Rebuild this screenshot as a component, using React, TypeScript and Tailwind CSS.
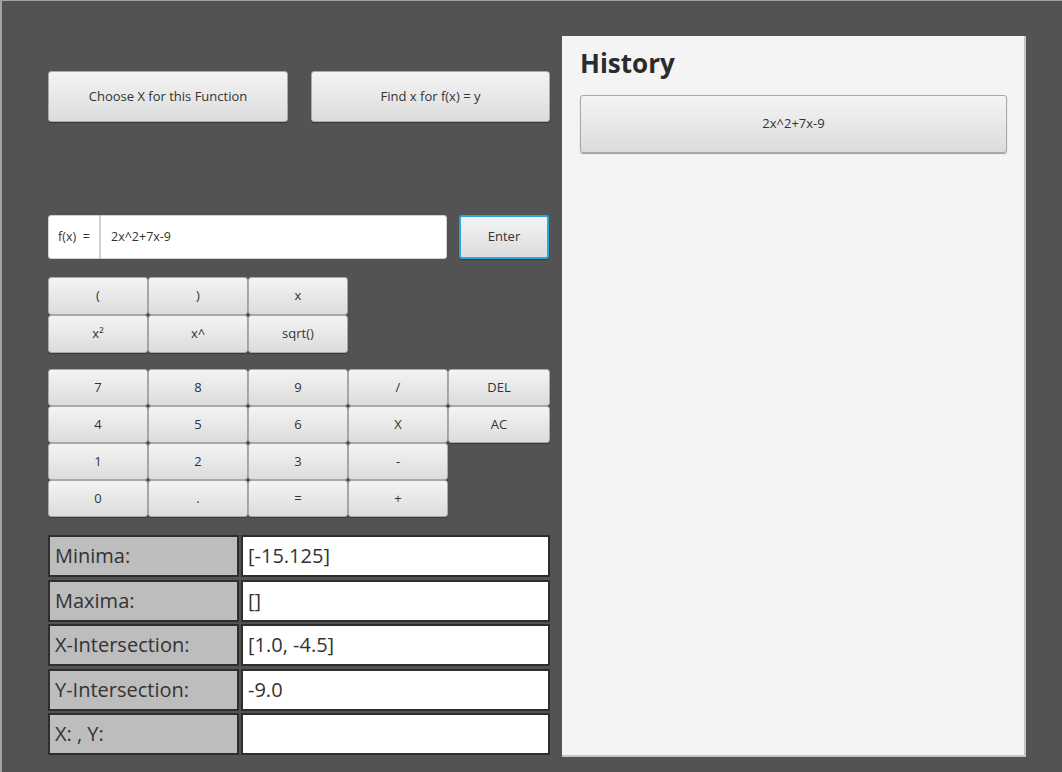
import React from "react";

const btn =
  "flex items-center justify-center text-[13px] text-[#333] bg-gradient-to-b from-[#f4f4f4] to-[#dcdcdc] border border-[#a9a9a9] rounded-[3px] shadow-[0_1px_1px_rgba(0,0,0,0.35)]";

const fnKeys = ["(", ")", "x", "x²", "x^", "sqrt()"];

const numKeys: (string | null)[] = [
  "7", "8", "9", "/", "DEL",
  "4", "5", "6", "X", "AC",
  "1", "2", "3", "-", null,
  "0", ".", "=", "+", null,
];

const results = [
  { label: "Minima:", value: "[-15.125]" },
  { label: "Maxima:", value: "[]" },
  { label: "X-Intersection:", value: "[1.0, -4.5]" },
  { label: "Y-Intersection:", value: "-9.0" },
  { label: "X: , Y:", value: "" },
];

export default function App() {
  return (
    <div
      className="w-[1062px] h-[772px] bg-[#535353] border-t border-l-2 border-[#a3a3a3] flex overflow-hidden"
      style={{ fontFamily: '"Open Sans", "Noto Sans", sans-serif' }}
    >
      {/* Left: calculator */}
      <div className="ml-[46px] w-[502px] flex flex-col">
        <div className="mt-[70px] flex gap-[23px]">
          <button className={`${btn} w-[240px] h-[51px]`}>Choose X for this Function</button>
          <button className={`${btn} w-[239px] h-[51px]`}>Find x for f(x) = y</button>
        </div>

        <div className="mt-[93px] flex items-stretch h-[44px]">
          <div className="w-[52px] bg-white rounded-l-[3px] border border-[#d0d0d0] flex items-center justify-center text-[12.5px] text-[#333]">
            f(x)&nbsp;&nbsp;=
          </div>
          <div className="w-[347px] bg-white rounded-r-[3px] border border-[#d0d0d0] flex items-center pl-[10px] text-[12.5px] text-[#333]">
            2x^2+7x-9
          </div>
          <button className={`${btn} ml-[12px] w-[90px] h-[44px] !border-[#2fa4d6] !border-2`}>
            Enter
          </button>
        </div>

        <div className="mt-[18px] grid grid-cols-[100px_100px_100px] grid-rows-[38px_38px]">
          {fnKeys.map((k) => (
            <button key={k} className={`${btn} rounded-[2px]`}>
              {k}
            </button>
          ))}
        </div>

        <div className="mt-[16px] grid grid-cols-[100px_100px_100px_100px_102px] grid-rows-[37px_37px_37px_37px]">
          {numKeys.map((k, i) =>
            k === null ? (
              <div key={i} />
            ) : (
              <button key={i} className={`${btn} rounded-[2px]`}>
                {k}
              </button>
            )
          )}
        </div>

        <div className="mt-[18px] flex flex-col gap-[2.5px]">
          {results.map((r) => (
            <div key={r.label} className="flex gap-[2px] h-[42px]">
              <div className="w-[191px] bg-[#bdbdbd] border-2 border-[#2e2e2e] flex items-center pl-[5px] text-[20px] text-[#333]">
                {r.label}
              </div>
              <div className="w-[309px] bg-white border-2 border-[#2e2e2e] flex items-center pl-[5px] text-[20px] text-[#333]">
                {r.value}
              </div>
            </div>
          ))}
        </div>
      </div>

      {/* Right: history */}
      <div className="ml-[12px] mt-[35px] w-[464px] h-[721px] bg-[#f4f4f4] border-r-2 border-b-2 border-[#c4c4c4] flex flex-col px-[18px]">
        <div className="mt-[9px] text-[26px] font-bold text-[#2b2b2b] leading-[36px]">History</div>
        <button className={`${btn} mt-[14px] w-[427px] h-[58px]`}>2x^2+7x-9</button>
      </div>
    </div>
  );
}
